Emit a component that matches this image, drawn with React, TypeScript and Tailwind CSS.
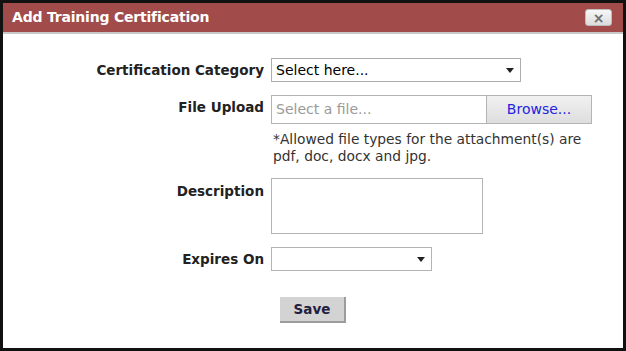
import React from "react";

const font = { fontFamily: '"DejaVu Sans", Verdana, sans-serif' };

function Caret() {
  return (
    <svg width="8" height="5" viewBox="0 0 8 5" className="shrink-0">
      <path d="M0 0 L8 0 L4 5 Z" fill="#222" />
    </svg>
  );
}

export default function App() {
  return (
    <div
      className="w-[626px] h-[351px] border-[3px] border-[#111] bg-white flex flex-col text-[#222]"
      style={font}
    >
      <div className="h-[31px] shrink-0 bg-[#a14b4b] border-b-2 border-[#c9c9c9] flex items-center justify-between pl-[9px] pr-[11px]">
        <div className="text-white font-bold text-[14px] tracking-[-0.2px]">
          Add Training Certification
        </div>
        <div className="w-[27px] h-[17px] rounded-[3px] border border-[#bdbdbd] bg-gradient-to-b from-[#f7f7f7] to-[#dcdcdc] flex items-center justify-center text-[#707070] text-[14px] font-bold leading-none">
          ×
        </div>
      </div>

      <div className="grid grid-cols-[261px_1fr] gap-x-[7px] pt-[24px]">
        <div className="h-[24px] flex items-center justify-end font-bold text-[13.5px]">
          Certification Category
        </div>
        <div className="w-[250px] h-[24px] border border-[#adadad] bg-white flex items-center justify-between pl-[4px] pr-[6px] text-[14px] text-black">
          <span>Select here...</span>
          <Caret />
        </div>

        <div className="mt-[13px] pt-[2px] flex justify-end font-bold text-[13.5px]">
          File Upload
        </div>
        <div className="mt-[13px] flex h-[29px]">
          <div className="w-[215px] border border-[#b4b4b4] border-r-0 bg-white flex items-center pl-[4px] text-[#9a9a9a] text-[14px]">
            Select a file...
          </div>
          <div className="w-[106px] border border-[#b4b4b4] bg-gradient-to-b from-[#f1f1f1] to-[#dedede] flex items-center justify-center text-[#2323e0] text-[14px]">
            Browse...
          </div>
        </div>

        <div />
        <div className="mt-[7px] pl-[2px] text-[13.8px] leading-[17px] text-[#333] w-[326px]">
          *Allowed file types for the attachment(s) are pdf, doc, docx and jpg.
        </div>

        <div className="mt-[13px] pt-[3px] flex justify-end font-bold text-[13.5px]">
          Description
        </div>
        <div className="mt-[13px] w-[212px] h-[56px] border border-[#b4b4b4] bg-white" />

        <div className="mt-[13px] h-[24px] flex items-center justify-end font-bold text-[13.5px]">
          Expires On
        </div>
        <div className="mt-[13px] w-[161px] h-[24px] border border-[#b4b4b4] bg-white flex items-center justify-end pr-[6px]">
          <Caret />
        </div>

        <div />
        <div className="mt-[26px] pl-[9px]">
          <div className="w-[66px] h-[26px] bg-[#d3d3d3] border-r-2 border-b-2 border-[#9c9c9c] flex items-center justify-center font-bold text-[13.5px] text-[#1f2040]">
            Save
          </div>
        </div>
      </div>
    </div>
  );
}
